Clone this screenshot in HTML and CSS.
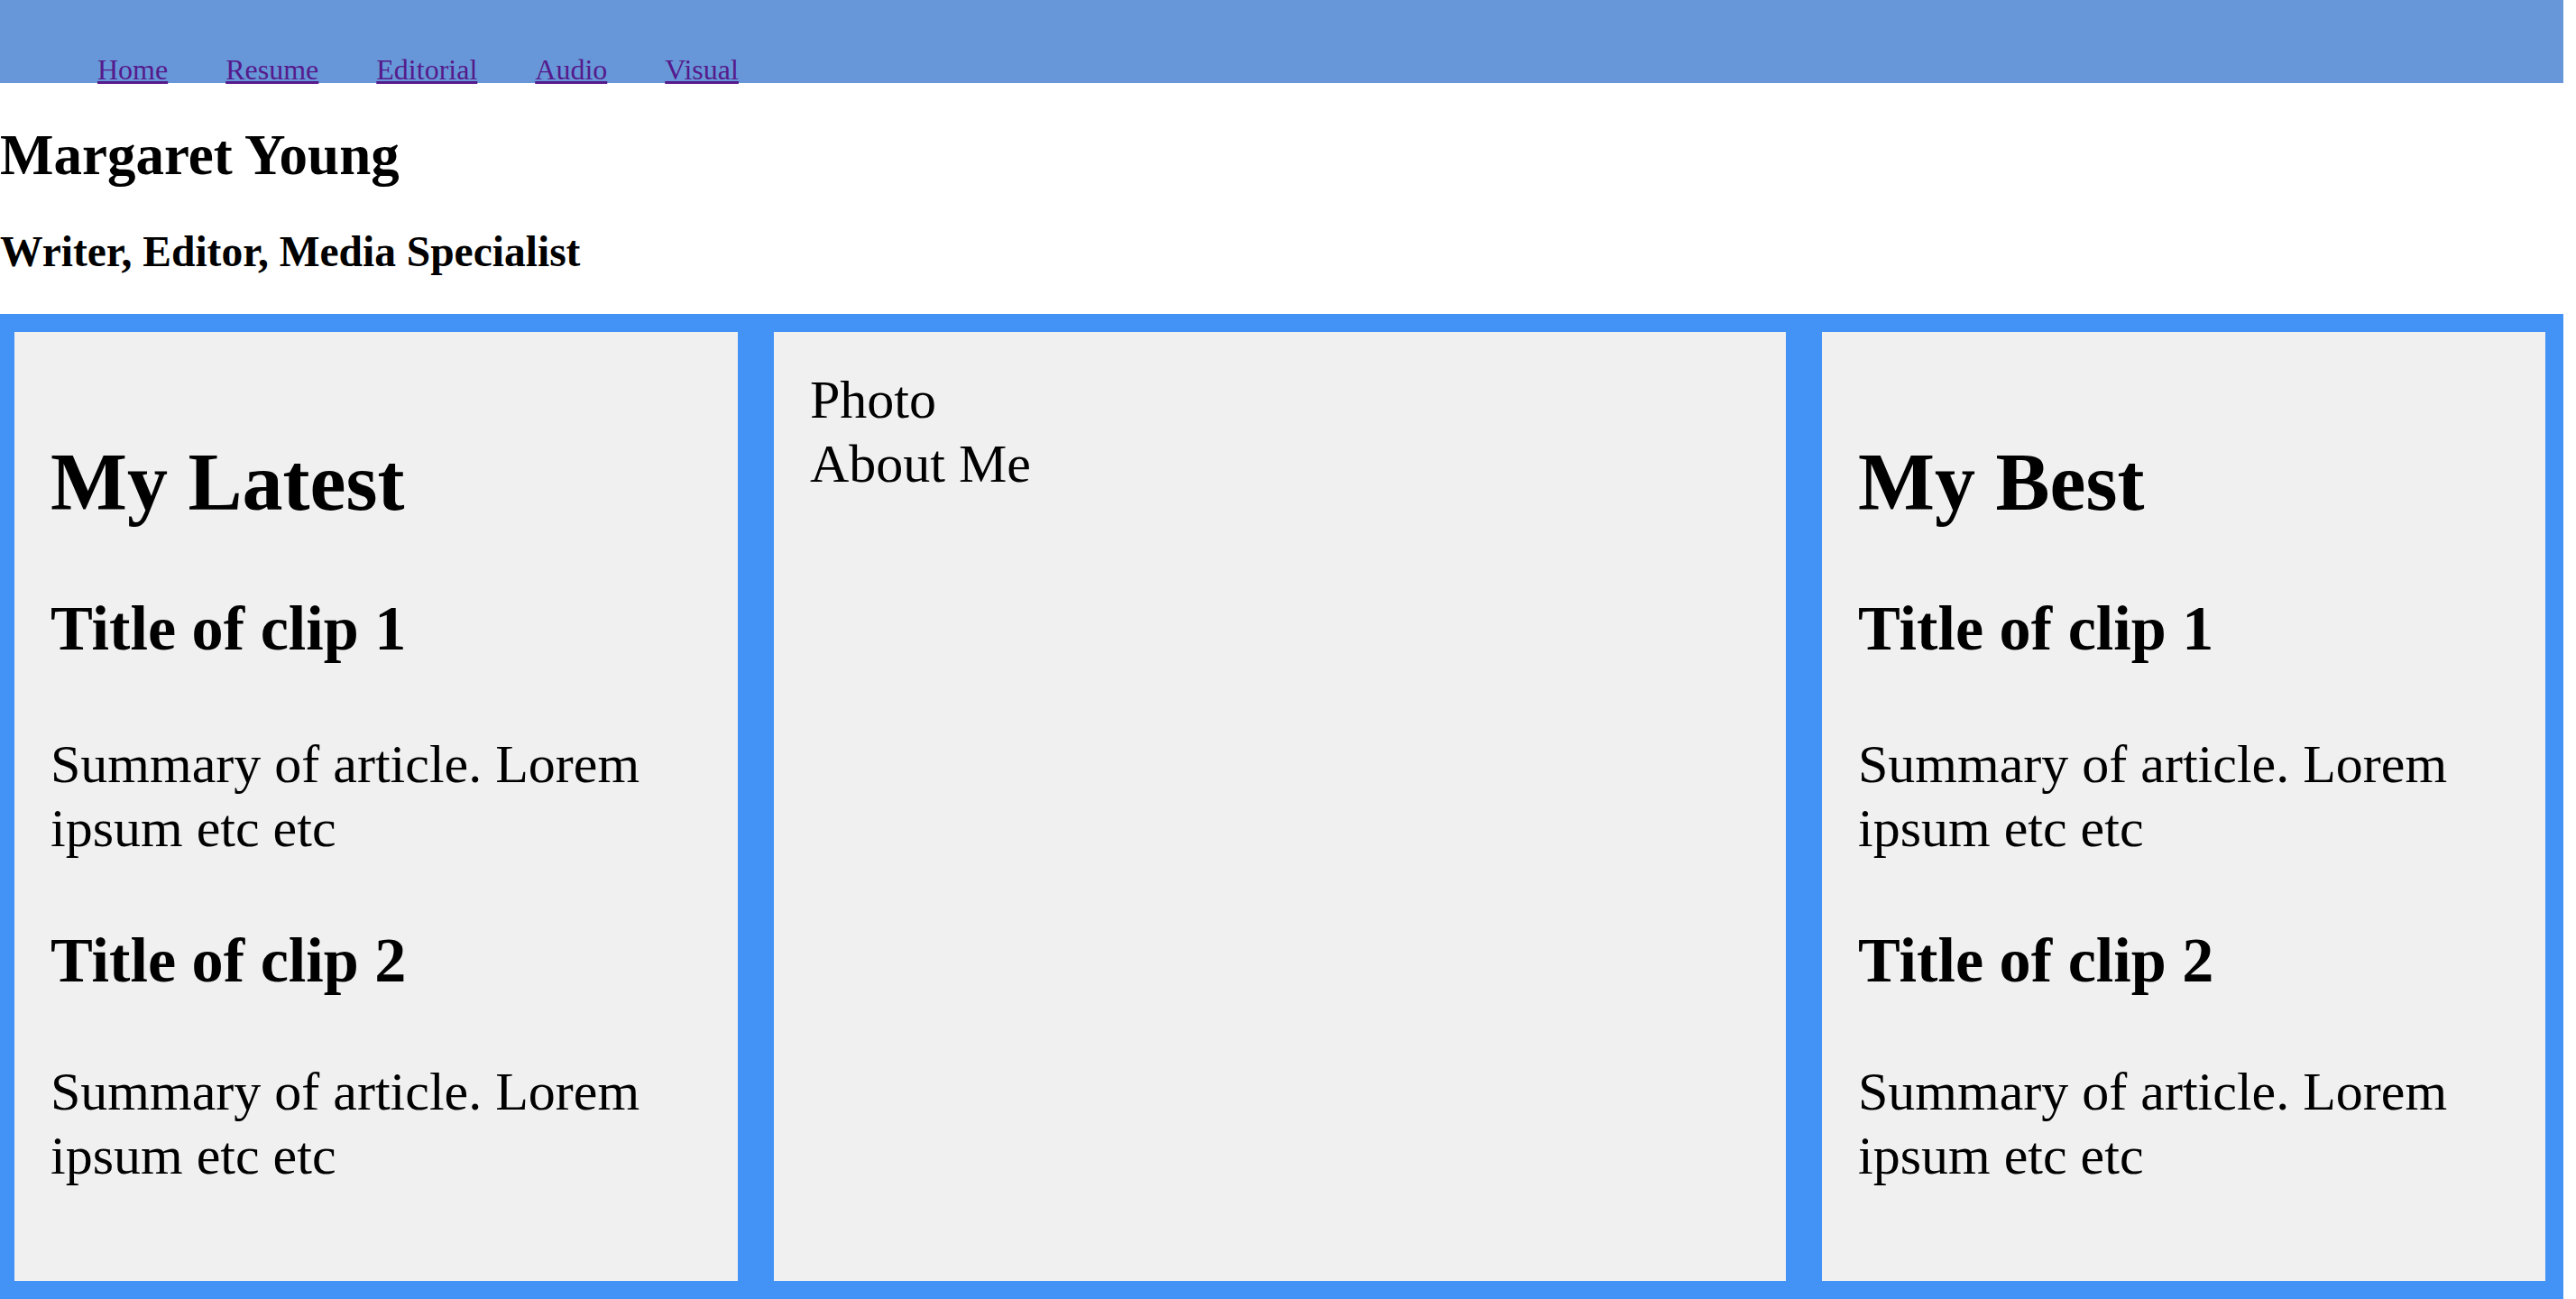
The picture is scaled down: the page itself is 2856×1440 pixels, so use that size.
FILE: index.html
```html
<!DOCTYPE html>
<html lang="en">
<head>
<meta charset="utf-8">
<title>Margaret Young</title>
<link rel="stylesheet" href="styles.css">
</head>
<body>
<div class="page">
  <header class="topbar">
    <nav>
      <ul class="nav-list">
        <li><a href="#">Home</a></li>
        <li><a href="#">Resume</a></li>
        <li><a href="#">Editorial</a></li>
        <li><a href="#">Audio</a></li>
        <li><a href="#">Visual</a></li>
      </ul>
    </nav>
  </header>
  <h1 class="site-title">Margaret Young</h1>
  <h2 class="site-subtitle">Writer, Editor, Media Specialist</h2>
  <main class="columns">
    <section class="panel">
      <h1 class="panel-title">My Latest</h1>
      <h3 class="clip-title">Title of clip 1</h3>
      <p class="clip-summary">Summary of article. Lorem ipsum etc etc</p>
      <h3 class="clip-title">Title of clip 2</h3>
      <p class="clip-summary">Summary of article. Lorem ipsum etc etc</p>
    </section>
    <section class="panel panel-middle">
      <div class="line">Photo</div>
      <div class="line">About Me</div>
    </section>
    <section class="panel">
      <h1 class="panel-title">My Best</h1>
      <h3 class="clip-title">Title of clip 1</h3>
      <p class="clip-summary">Summary of article. Lorem ipsum etc etc</p>
      <h3 class="clip-title">Title of clip 2</h3>
      <p class="clip-summary">Summary of article. Lorem ipsum etc etc</p>
    </section>
  </main>
</div>
</body>
</html>
```
FILE: styles.css
```css
html, body {
  margin: 0;
  padding: 0;
  background: #ffffff;
}

body {
  font-family: "Liberation Serif", "Times New Roman", serif;
  color: #000000;
}

.page {
  width: 2842px;
}

.topbar {
  height: 92px;
  background: #6797d8;
}

.nav-list {
  list-style: none;
  margin: 0;
  padding: 59px 0 0 108px;
  display: flex;
  gap: 64px;
  font-size: 32px;
  line-height: 37px;
}

.nav-list a {
  color: #551a8b;
  text-decoration: underline;
}

.site-title {
  font-size: 63px;
  font-weight: bold;
  margin: 43.5px 0 43.5px;
}

.site-subtitle {
  font-size: 47.5px;
  font-weight: bold;
  margin: 40.5px 0 42px;
}

.columns {
  display: grid;
  grid-template-columns: 802px 1122px 802px;
  column-gap: 40px;
  padding: 20px 20px 20px 16px;
  background: #4392f5;
}

.panel {
  background: #f0f0f0;
  padding: 40px 40px 43px 40px;
  font-size: 60px;
}

.panel-title {
  font-size: 90px;
  font-weight: bold;
  margin: 74.7px 0 70.7px;
  line-height: normal;
}

.clip-title {
  font-size: 70.2px;
  font-weight: bold;
  margin: 70.2px 0;
  line-height: normal;
}

.panel-title + .clip-title {
  margin-bottom: 74.2px;
}

.clip-summary {
  font-size: 60px;
  line-height: 71px;
  margin: 60px 0;
}

.line {
  line-height: 71px;
}
```
